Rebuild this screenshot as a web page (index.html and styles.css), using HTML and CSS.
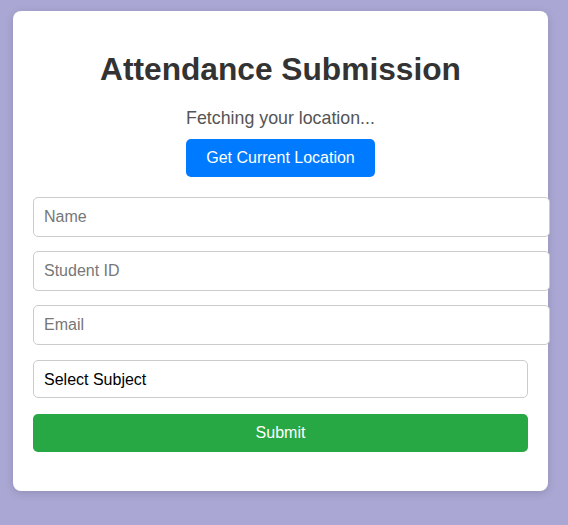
FILE: index.html
```html
<!DOCTYPE html>
<html lang="en">
<head>
<meta charset="utf-8">
<title>Attendance Submission</title>
<link rel="stylesheet" href="styles.css">
</head>
<body>
<div class="card">
  <h2 class="title">Attendance Submission</h2>
  <p class="status">Fetching your location...</p>
  <div class="loc-row">
    <button class="btn-loc" type="button">Get Current Location</button>
  </div>
  <form class="form">
    <input class="field" type="text" placeholder="Name">
    <input class="field" type="text" placeholder="Student ID">
    <input class="field" type="email" placeholder="Email">
    <select class="select">
      <option>Select Subject</option>
    </select>
    <button class="btn-submit" type="button">Submit</button>
  </form>
</div>
</body>
</html>
```
FILE: styles.css
```css
html, body {
  margin: 0;
  padding: 0;
}
body {
  background: #aaa7d4;
  font-family: "Liberation Sans", Arial, sans-serif;
  padding: 11px 0 0 13px;
  height: 525px;
  box-sizing: border-box;
}
.card {
  background: #ffffff;
  width: 535px;
  box-sizing: border-box;
  padding: 20px 20px 39px;
  border-radius: 8px;
  box-shadow: 0 2px 8px rgba(0, 0, 0, 0.15);
  text-align: center;
}
.title {
  margin: 20px 0 0;
  font-size: 31.7px;
  font-weight: bold;
  color: #333333;
  line-height: 37px;
}
.status {
  margin: 20px 0 0;
  font-size: 17.8px;
  color: #555555;
  line-height: 21px;
}
.loc-row {
  margin-top: 10px;
  display: flex;
  justify-content: center;
}
.btn-loc {
  background: #007bff;
  color: #ffffff;
  border: none;
  border-radius: 5px;
  padding: 10px 20px;
  font-family: inherit;
  font-size: 16px;
  line-height: 18px;
  height: 38px;
}
.form {
  margin-top: 20px;
  display: flex;
  flex-direction: column;
  align-items: flex-start;
  gap: 14px;
  text-align: left;
}
.field {
  width: 100%;
  flex: none;
  box-sizing: content-box;
  padding: 10px;
  height: 18px;
  font-family: inherit;
  font-size: 16px;
  border: 1px solid #cccccc;
  border-radius: 5px;
  color: #333;
  background: #fff;
  margin: 0;
}
.field::placeholder {
  color: #777777;
}
.select {
  width: 100%;
  box-sizing: border-box;
  height: 38px;
  padding: 0 10px;
  font-family: inherit;
  font-size: 16px;
  border: 1px solid #cccccc;
  border-radius: 5px;
  background: #fff;
  color: #000;
  appearance: none;
  -webkit-appearance: none;
  margin: 1px 0 0;
}
.btn-submit {
  width: 100%;
  height: 38px;
  background: #28a745;
  color: #ffffff;
  border: none;
  border-radius: 5px;
  font-family: inherit;
  font-size: 16px;
  margin: 2px 0 0;
}
```
